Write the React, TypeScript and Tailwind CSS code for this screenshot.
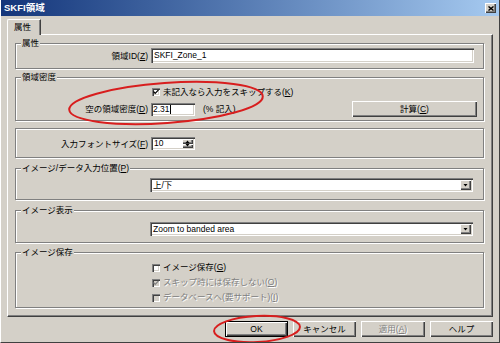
import React from "react";

// classic win32 bevels
const raised =
  "bg-[#d4d0c8] shadow-[inset_1px_1px_0_#ffffff,inset_-1px_-1px_0_#404040,inset_-2px_-2px_0_#808080]";
const sunken =
  "bg-white shadow-[inset_1px_1px_0_#808080,inset_2px_2px_0_#404040,inset_-1px_-1px_0_#ffffff,inset_-2px_-2px_0_#d4d0c8]";
const etched = "border border-[#808080] shadow-[inset_1px_1px_0_#ffffff,1px_1px_0_#ffffff]";
const disabled = "text-[#808080] [text-shadow:1px_1px_0_#ffffff]";

const U = ({ children }: { children: React.ReactNode }) => <span className="underline">{children}</span>;

const Group = ({
  label,
  className,
  children,
}: {
  label?: React.ReactNode;
  className?: string;
  children?: React.ReactNode;
}) => (
  <div className={`${etched} flex flex-col w-[469px] ${className ?? ""}`}>
    {label && (
      <div className="-mt-[6px] ml-[5px] w-fit h-[10px] bg-[#d4d0c8] px-[1px] leading-[10px]">{label}</div>
    )}
    {children}
  </div>
);

const Label = ({ children }: { children: React.ReactNode }) => (
  <div className="w-[133px] shrink-0 pr-[1px] text-right leading-[12px] whitespace-nowrap">{children}</div>
);

const Check = ({ checked, off }: { checked?: boolean; off?: boolean }) => (
  <div
    className={`w-[8px] h-[8px] shrink-0 flex items-center justify-center ${sunken} ${
      off ? "!bg-[#d4d0c8]" : ""
    }`}
  >
    {checked && (
      <svg width="6" height="6" viewBox="0 0 6 6">
        <path d="M0.5 2.5 L2.2 4.3 L5.5 0.8" stroke={off ? "#808080" : "#000"} strokeWidth="1.2" fill="none" />
      </svg>
    )}
  </div>
);

const Arrow = ({ up }: { up?: boolean }) => (
  <svg width="5" height="3" viewBox="0 0 5 3">
    <path d={up ? "M0.5 3 L2.5 0.5 L4.5 3 Z" : "M0.5 0 L4.5 0 L2.5 2.5 Z"} fill="#000" />
  </svg>
);

const Select = ({ value }: { value: string }) => (
  <div className={`w-[323px] h-[14px] flex items-center ${sunken}`}>
    <span className="flex-1 pl-[3px] leading-[12px] whitespace-nowrap">{value}</span>
    <div className={`w-[11px] h-[10px] mr-[2px] flex items-center justify-center ${raised}`}>
      <Arrow />
    </div>
  </div>
);

const Button = ({
  children,
  def,
  off,
  className,
}: {
  children: React.ReactNode;
  def?: boolean;
  off?: boolean;
  className?: string;
}) => (
  <div
    className={`h-[16px] flex items-center justify-center leading-[12px] ${raised} ${
      def ? "border border-black" : ""
    } ${off ? disabled : ""} ${className ?? ""}`}
  >
    {children}
  </div>
);

export default function App() {
  return (
    <div className="relative w-[500px] h-[343px] overflow-hidden bg-[#d4d0c8] border-l border-l-[#ffffff] border-r border-r-[#404040] border-b border-b-[#404040] text-[8.5px] text-black font-['Liberation_Sans','Noto_Sans_CJK_JP',sans-serif]">
      {/* title bar */}
      <div className="h-[16px] flex items-center justify-between pl-[3px] pr-[3px] bg-linear-to-r from-[#14357a] to-[#a6caf0]">
        <span className="text-white font-bold text-[9.5px] leading-[12px]">SKFI領域</span>
        <div className={`w-[11px] h-[10px] flex items-center justify-center ${raised}`}>
          <svg width="6" height="5" viewBox="0 0 6 5">
            <path d="M0.5 0.5 L5.5 4.5 M5.5 0.5 L0.5 4.5" stroke="#000" strokeWidth="1.4" />
          </svg>
        </div>
      </div>

      <div className="pl-[6px] flex flex-col">
        {/* tab */}
        <div className="mt-[3px] relative z-10 -mb-[1px] w-[34px] h-[16px] bg-[#d4d0c8] border-l border-t border-l-[#ffffff] border-t-[#ffffff] border-r border-r-[#404040] rounded-tl-[2px] shadow-[inset_-1px_0_0_#808080] flex items-start pl-[6px] pt-[2px] leading-[11px]">
          属性
        </div>

        {/* tab panel */}
        <div className="w-[486px] h-[283px] border border-t-[#ffffff] border-l-[#ffffff] border-r-[#404040] border-b-[#404040] shadow-[inset_-1px_-1px_0_#808080] pl-[7px] flex flex-col">
          <Group label="属性" className="mt-[8px] h-[26px]">
            <div className="flex items-center">
              <Label>
                領域ID(<U>Z</U>)
              </Label>
              <div className={`ml-[2px] w-[323px] h-[15px] flex items-center pl-[3px] ${sunken}`}>SKFI_Zone_1</div>
            </div>
          </Group>

          <Group label="領域密度" className="mt-[8px] h-[44px]">
            <div className="mt-[4px] h-[12px] flex items-center pl-[136px] gap-[3px] whitespace-nowrap">
              <Check checked />
              <span>
                未記入なら入力をスキップする(<U>K</U>)
              </span>
            </div>
            <div className="mt-[2px] h-[18px] flex items-center">
              <Label>
                空の領域密度(<U>D</U>)
              </Label>
              <div className={`ml-[2px] w-[44px] h-[13px] flex items-center pl-[2px] ${sunken}`}>
                2.31<span className="inline-block w-[1px] h-[9px] bg-black" />
              </div>
              <span className="ml-[8px]">(% 記入)</span>
              <Button className="ml-auto mr-[6px] w-[125px]">
                計算(<U>C</U>)
              </Button>
            </div>
          </Group>

          <Group className="mt-[7px] h-[30px]">
            <div className="mt-[8px] flex items-center">
              <Label>
                入力フォントサイズ(<U>F</U>)
              </Label>
              <div className={`ml-[2px] w-[44px] h-[13px] flex ${sunken}`}>
                <span className="flex-1 pl-[3px] leading-[13px]">10</span>
                <div className="w-[11px] my-[2px] mr-[2px] flex flex-col">
                  <div className={`flex-1 flex items-center justify-center ${raised}`}>
                    <Arrow up />
                  </div>
                  <div className={`flex-1 flex items-center justify-center ${raised}`}>
                    <Arrow />
                  </div>
                </div>
              </div>
            </div>
          </Group>

          <Group
            label={
              <>
                イメージ/データ入力位置(<U>P</U>)
              </>
            }
            className="mt-[10px] h-[32px]"
          >
            <div className="mt-[5px] pl-[134px]">
              <Select value="上/下" />
            </div>
          </Group>

          <Group label="イメージ表示" className="mt-[10px] h-[33px]">
            <div className="mt-[7px] pl-[134px]">
              <Select value="Zoom to banded area" />
            </div>
          </Group>

          <Group label="イメージ保存" className="mt-[9px] h-[56px]">
            <div className="mt-[3px] flex flex-col pl-[136px] whitespace-nowrap">
              <div className="h-[15px] flex items-center gap-[3px]">
                <Check />
                <span>
                  イメージ保存(<U>G</U>)
                </span>
              </div>
              <div className="h-[15px] flex items-center gap-[3px]">
                <Check checked off />
                <span className={disabled}>
                  スキップ時には保存しない(<U>O</U>)
                </span>
              </div>
              <div className="h-[15px] flex items-center gap-[3px]">
                <Check off />
                <span className={disabled}>
                  データベースへ(要サポート)(<U>I</U>)
                </span>
              </div>
            </div>
          </Group>
        </div>

        {/* dialog buttons */}
        <div className="mt-[4px] pl-[218px] flex gap-[5px]">
          <Button def className="w-[63px]">
            OK
          </Button>
          <Button className="w-[63px]">キャンセル</Button>
          <Button off className="w-[64px]">
            適用(<U>A</U>)
          </Button>
          <Button className="w-[63px]">ヘルプ</Button>
        </div>
      </div>

      {/* red annotation marks */}
      <svg className="absolute inset-0 pointer-events-none" width="500" height="343" viewBox="0 0 500 343">
        <ellipse cx="165" cy="103" rx="97" ry="20" transform="rotate(-4 165 103)" fill="none" stroke="#d81e1e" strokeWidth="2" />
        <ellipse cx="256" cy="329" rx="43" ry="13" transform="rotate(-3 256 329)" fill="none" stroke="#d81e1e" strokeWidth="2" />
      </svg>
    </div>
  );
}
